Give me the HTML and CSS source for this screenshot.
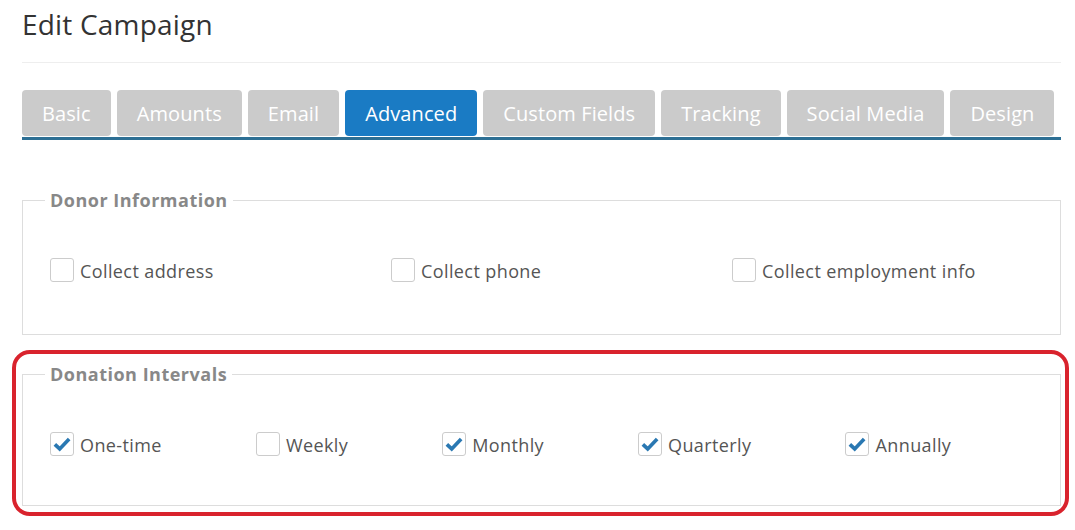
FILE: index.html
```html
<!DOCTYPE html>
<html>
<head>
<meta charset="utf-8">
<link rel="stylesheet" href="styles.css">
</head>
<body>
<div class="page">
  <h1 class="title">Edit Campaign</h1>
  <div class="rule"></div>
  <nav class="tabs">
    <span class="tab">Basic</span>
    <span class="tab">Amounts</span>
    <span class="tab">Email</span>
    <span class="tab active">Advanced</span>
    <span class="tab">Custom Fields</span>
    <span class="tab">Tracking</span>
    <span class="tab">Social Media</span>
    <span class="tab">Design</span>
  </nav>

  <fieldset class="group donor">
    <legend>Donor Information</legend>
    <div class="cols">
      <label class="check"><span class="box"></span><span class="text">Collect address</span></label>
      <label class="check"><span class="box"></span><span class="text">Collect phone</span></label>
      <label class="check"><span class="box"></span><span class="text">Collect employment info</span></label>
    </div>
  </fieldset>

  <div class="highlight">
    <fieldset class="group intervals">
      <legend>Donation Intervals</legend>
      <div class="inline">
        <label class="check"><span class="box"><svg viewBox="0 0 24 24"><path d="M4.2 12.4 L9.5 17.4 L19.8 6.6"/></svg></span><span class="text">One-time</span></label>
        <label class="check"><span class="box"></span><span class="text">Weekly</span></label>
        <label class="check"><span class="box"><svg viewBox="0 0 24 24"><path d="M4.2 12.4 L9.5 17.4 L19.8 6.6"/></svg></span><span class="text">Monthly</span></label>
        <label class="check"><span class="box"><svg viewBox="0 0 24 24"><path d="M4.2 12.4 L9.5 17.4 L19.8 6.6"/></svg></span><span class="text">Quarterly</span></label>
        <label class="check"><span class="box"><svg viewBox="0 0 24 24"><path d="M4.2 12.4 L9.5 17.4 L19.8 6.6"/></svg></span><span class="text">Annually</span></label>
      </div>
    </fieldset>
  </div>
</div>
</body>
</html>
```

FILE: styles.css
```css
* { box-sizing: border-box; }
html, body { margin: 0; padding: 0; background: #fff; }
body { font-family: "Open Sans", "Liberation Sans", sans-serif; color: #555; }

.page { width: 1039px; margin-left: 22px; }

.title {
  margin: 0;
  padding-top: 6px;
  font-size: 28px;
  letter-spacing: 0.2px;
  line-height: 36px;
  font-weight: 400;
  color: #333;
}

.rule { height: 1px; background: #eee; margin-top: 20px; }

.tabs {
  display: flex;
  gap: 6px;
  margin-top: 27px;
  padding-bottom: 1px;
  border-bottom: 3px solid #2d6f94;
  width: 1039px;
}
.tab {
  background: #cbcbcb;
  color: #fff;
  font-size: 20px;
  letter-spacing: 0.1px;
  line-height: 26px;
  padding: 11px 20px 9px;
  border-radius: 4px;
}
.tab.active { background: #1a7bc4; }

.group {
  margin: 0;
  border: 1px solid #ddd;
  padding: 0 27px;
  min-width: 0;
}
.group legend {
  font-size: 18px;
  font-weight: 700;
  letter-spacing: 0.5px;
  color: #888;
  line-height: 24px;
  padding: 0 5px;
  margin-left: -5px;
}
.donor { margin-top: 48px; }

.cols {
  display: grid;
  grid-template-columns: 341px 341px 1fr;
  padding-top: 46px;
  padding-bottom: 52px;
}
.inline {
  display: flex;
  gap: 94px;
  padding-top: 46px;
  padding-bottom: 49px;
}

.check {
  display: flex;
  align-items: center;
  gap: 6px;
  font-size: 18px;
  letter-spacing: 0.4px;
  line-height: 24px;
  height: 24px;
  color: #555;
}
.check .text { line-height: 22px; padding-top: 2px; }
.box {
  width: 24px;
  height: 24px;
  border: 1px solid #ccc;
  border-radius: 3px;
  background: #fff;
  flex: none;
  display: flex;
}
.box svg { width: 22px; height: 22px; }
.box path {
  fill: none;
  stroke: #2a78b2;
  stroke-width: 4;
  stroke-linecap: butt;
  stroke-linejoin: miter;
}

.highlight {
  margin-left: -10px;
  width: 1057px;
  margin-top: 15px;
  border: 4px solid #d9232d;
  border-radius: 18px;
  padding: 8px 4px 6px 6px;
}
```
